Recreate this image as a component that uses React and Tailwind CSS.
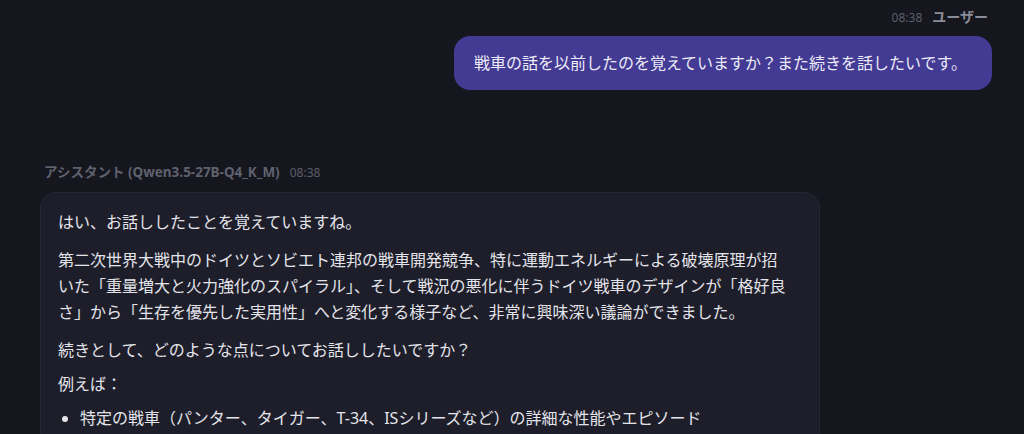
const font = { fontFamily: '"Noto Sans", "Noto Sans CJK JP", sans-serif' };

const UserMessage = ({ time, name, text }) => (
  <div className="flex flex-col items-end">
    <div className="flex items-baseline gap-[10px] pr-1 h-[20px]">
      <span className="text-[12px] text-[#5c5e6b]">{time}</span>
      <span className="text-[14px] font-bold text-[#8a8c99]">{name}</span>
    </div>
    <div className="mt-[10px] rounded-[16px] bg-[#433a93] pl-[20px] pr-[25px] py-[14px] text-[16px] leading-[26px] text-[#ecebf7]">
      {text}
    </div>
  </div>
);

const AssistantMessage = ({ model, time }) => (
  <div className="flex flex-col items-start">
    <div className="flex items-baseline gap-[10px] pl-1 h-[20px]">
      <span className="text-[13.5px] font-bold text-[#5f616e]">アシスタント ({model})</span>
      <span className="text-[12px] text-[#5c5e6b]">{time}</span>
    </div>
    <div className="mt-[10px] w-[780px] rounded-[16px] border border-[#262734] bg-[#1d1e2a] pl-[17px] pr-[17px] pt-[16px] pb-[16px] text-[16px] leading-[26px] text-[#e4e4ea]">
      <p className="mb-3">はい、お話ししたことを覚えていますね。</p>
      <p className="mb-3">
        第二次世界大戦中のドイツとソビエト連邦の戦車開発競争、特に運動エネルギーによる破壊原理が招<br />
        いた「重量増大と火力強化のスパイラル」、そして戦況の悪化に伴うドイツ戦車のデザインが「格好良<br />
        さ」から「生存を優先した実用性」へと変化する様子など、非常に興味深い議論ができました。
      </p>
      <p className="mb-2">続きとして、どのような点についてお話ししたいですか？</p>
      <p className="mb-2">例えば：</p>
      <ul className="list-disc pl-[22px] marker:text-[#e4e4ea]">
        <li>特定の戦車（パンター、タイガー、T-34、ISシリーズなど）の詳細な性能やエピソード</li>
      </ul>
    </div>
  </div>
);

export default function App() {
  return (
    <div className="h-[434px] w-full overflow-hidden bg-[#15161e]" style={font}>
      <div className="pl-[40px] pr-[32px] pt-[6px]">
        <UserMessage
          time="08:38"
          name="ユーザー"
          text="戦車の話を以前したのを覚えていますか？また続きを話したいです。"
        />
        <div className="mt-[72px]">
          <AssistantMessage model="Qwen3.5-27B-Q4_K_M" time="08:38" />
        </div>
      </div>
    </div>
  );
}
